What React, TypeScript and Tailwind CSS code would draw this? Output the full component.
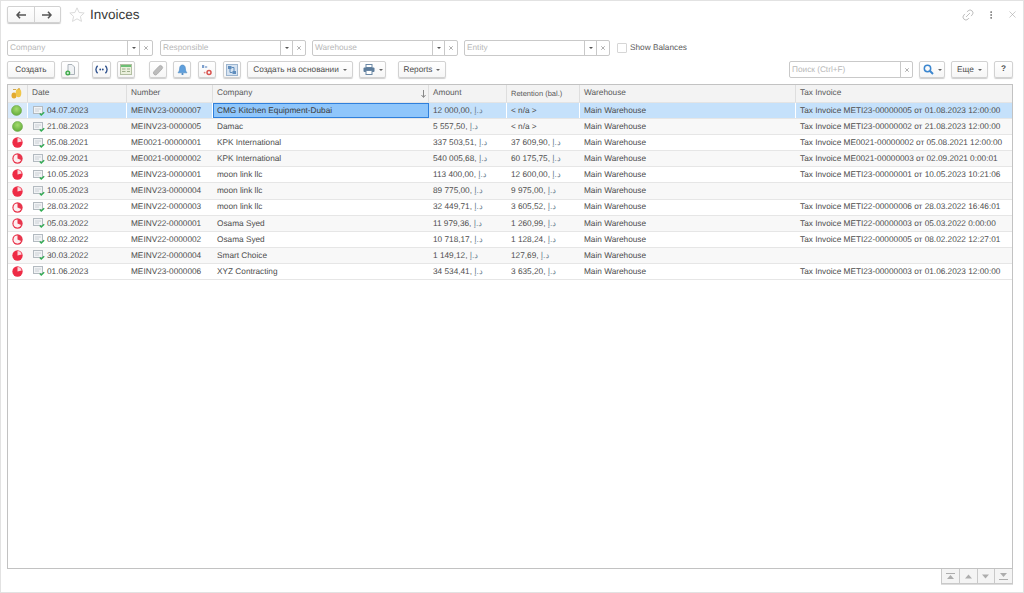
import type { ReactNode } from 'react'
import { X, MoreVertical, Link2 } from 'lucide-react'

type Status = 'paid' | 'part' | 'late'

const DH = 'د.إ'

const rows: { s: Status; date: string; num: string; co: string; amt: string; ret: string; tax: string }[] = [
  { s: 'paid', date: '04.07.2023', num: 'MEINV23-0000007', co: 'CMG Kitchen Equipment-Dubai', amt: '12 000,00', ret: '', tax: 'Tax Invoice METI23-00000005 от 01.08.2023 12:00:00' },
  { s: 'paid', date: '21.08.2023', num: 'MEINV23-0000005', co: 'Damac', amt: '5 557,50', ret: '', tax: 'Tax Invoice METI23-00000002 от 21.08.2023 12:00:00' },
  { s: 'late', date: '05.08.2021', num: 'ME0021-00000001', co: 'KPK International', amt: '337 503,51', ret: '37 609,90', tax: 'Tax Invoice ME0021-00000002 от 05.08.2021 12:00:00' },
  { s: 'part', date: '02.09.2021', num: 'ME0021-00000002', co: 'KPK International', amt: '540 005,68', ret: '60 175,75', tax: 'Tax Invoice ME0021-00000003 от 02.09.2021 0:00:01' },
  { s: 'late', date: '10.05.2023', num: 'MEINV23-0000001', co: 'moon link llc', amt: '113 400,00', ret: '12 600,00', tax: 'Tax Invoice METI23-00000001 от 10.05.2023 10:21:06' },
  { s: 'late', date: '10.05.2023', num: 'MEINV23-0000004', co: 'moon link llc', amt: '89 775,00', ret: '9 975,00', tax: '' },
  { s: 'part', date: '28.03.2022', num: 'MEINV22-0000003', co: 'moon link llc', amt: '32 449,71', ret: '3 605,52', tax: 'Tax Invoice METI22-00000006 от 28.03.2022 16:46:01' },
  { s: 'part', date: '05.03.2022', num: 'MEINV22-0000001', co: 'Osama Syed', amt: '11 979,36', ret: '1 260,99', tax: 'Tax Invoice METI22-00000003 от 05.03.2022 0:00:00' },
  { s: 'part', date: '08.02.2022', num: 'MEINV22-0000002', co: 'Osama Syed', amt: '10 718,17', ret: '1 128,24', tax: 'Tax Invoice METI22-00000005 от 08.02.2022 12:27:01' },
  { s: 'late', date: '30.03.2022', num: 'MEINV22-0000004', co: 'Smart Choice', amt: '1 149,12', ret: '127,69', tax: '' },
  { s: 'late', date: '01.06.2023', num: 'MEINV23-0000006', co: 'XYZ Contracting', amt: '34 534,41', ret: '3 635,20', tax: 'Tax Invoice METI23-00000003 от 01.06.2023 12:00:00' },
]

const gridCols = 'grid grid-cols-[20px_99px_86px_216px_78px_73px_216px_1fr]'

function Btn({ children, className = '' }: { children: ReactNode; className?: string }) {
  return (
    <div className={`flex h-[17px] shrink-0 items-center justify-center rounded-[2px] border border-[#d2d2d2] bg-gradient-to-b from-white to-[#f6f6f6] text-[8.25px] text-[#4d4d4d] shadow-[0_1px_1px_#cfcfcf] ${className}`}>
      {children}
    </div>
  )
}

function Caret() {
  return <span className="ml-1 h-0 w-0 border-x-[2px] border-t-[2.5px] border-x-transparent border-t-[#666]" />
}

function Filter({ label, className = '' }: { label: string; className?: string }) {
  return (
    <div className={`flex h-[16px] w-[146px] shrink-0 items-center rounded-[2px] border border-[#c9c9c9] bg-white text-[8.25px] text-[#b8b8b8] ${className}`}>
      <span className="flex-1 pl-[2px] pt-[1px]">{label}</span>
      <span className="flex h-full w-[12px] items-center justify-center border-l border-[#c9c9c9]">
        <span className="h-0 w-0 border-x-[2px] border-t-[2.5px] border-x-transparent border-t-[#555]" />
      </span>
      <span className="flex h-full w-[13px] items-center justify-center border-l border-[#c9c9c9]">
        <X size={6} strokeWidth={2.5} className="text-[#808080]" />
      </span>
    </div>
  )
}

function StatusIcon({ s }: { s: Status }) {
  if (s === 'paid') {
    return (
      <svg width="11" height="11" viewBox="0 0 10 10">
        <defs>
          <radialGradient id="gr" cx="50%" cy="35%" r="65%">
            <stop offset="0%" stopColor="#a5dc6e" />
            <stop offset="100%" stopColor="#62ab3a" />
          </radialGradient>
        </defs>
        <circle cx="5" cy="5" r="4.6" fill="url(#gr)" stroke="#6aa548" strokeWidth="0.5" />
      </svg>
    )
  }
  if (s === 'late') {
    return (
      <svg width="11" height="11" viewBox="0 0 10 10">
        <circle cx="5" cy="5" r="4.7" fill="#ee2b45" />
        <path d="M5 5 L5 1 A4 4 0 0 1 8.8 4 Z" fill="#fbd5da" />
      </svg>
    )
  }
  return (
    <svg width="11" height="11" viewBox="0 0 10 10">
      <circle cx="5" cy="5" r="4.7" fill="#e8354c" />
      <path d="M5 5 L5 1.4 A3.6 3.6 0 1 0 8.3 6.4 Z" fill="#fdeef0" />
    </svg>
  )
}

function DocIcon() {
  return (
    <svg width="12" height="10" viewBox="0 0 12 10" className="-mt-[1px] shrink-0">
      <rect x="0.5" y="0.5" width="9" height="7" fill="#f1f3f5" stroke="#b3bac0" />
      <path d="M2 3h6M2 5h4" stroke="#ccd1d6" />
      <path d="M6.8 7.4 L8.3 9 L11.2 6.2" fill="none" stroke="#35ad55" strokeWidth="1.4" />
    </svg>
  )
}

function Currency({ value }: { value: string }) {
  return (
    <span>
      {value}, <span className="text-[#6b7f92]">{DH}</span>
    </span>
  )
}

function Cell({ children, className = '' }: { children?: ReactNode; className?: string }) {
  return <div className={`flex items-center overflow-hidden whitespace-nowrap pl-[4px] pt-[1px] ${className}`}>{children}</div>
}

function HeadCell({ children, className = '' }: { children?: ReactNode; className?: string }) {
  return <div className={`flex items-center border-r border-[#dedede] pl-[4px] ${className}`}>{children}</div>
}

export default function App() {
  return (
    <div className="flex h-[593px] w-[1024px] flex-col overflow-hidden border border-[#e2e2e2] bg-white font-['Liberation_Sans',Arial,sans-serif] text-[8.25px] text-[#4d4d4d] [text-rendering:geometricPrecision]">
      {/* title */}
      <div className="flex h-[22px] shrink-0 items-center pl-[6px] pt-[5px]">
        <div className="flex h-[17px] w-[54px] rounded-[2px] border border-[#d2d2d2] bg-gradient-to-b from-white to-[#f6f6f6] shadow-[0_1px_1px_#c8c8c8]">
          <span className="flex flex-1 items-center justify-center border-r border-[#d2d2d2]">
            <svg width="10" height="8" viewBox="0 0 10 8"><path d="M4 0.8 L1 4 L4 7.2 M1 4 H10" fill="none" stroke="#555" strokeWidth="1.6" /></svg>
          </span>
          <span className="flex flex-1 items-center justify-center">
            <svg width="10" height="8" viewBox="0 0 10 8"><path d="M6 0.8 L9 4 L6 7.2 M9 4 H0" fill="none" stroke="#555" strokeWidth="1.6" /></svg>
          </span>
        </div>
        <svg width="16" height="15" viewBox="0 0 16 15" className="ml-[8px]">
          <path d="M8 0.8 L10.1 5.5 L15.2 6 L11.4 9.4 L12.5 14.4 L8 11.8 L3.5 14.4 L4.6 9.4 L0.8 6 L5.9 5.5 Z" fill="#fff" stroke="#dadada" />
        </svg>
        <span className="ml-[5px] mt-[1px] text-[13.5px] text-[#3a3a3a]">Invoices</span>
        <div className="ml-auto flex items-center gap-[11px] pr-[5px] text-[#a0a0a0]">
          <Link2 size={14} strokeWidth={1.1} className="-rotate-45" />
          <MoreVertical size={10} className="text-[#666]" strokeWidth={2} />
          <X size={11} strokeWidth={1.2} />
        </div>
      </div>

      {/* filters */}
      <div className="mt-[17px] flex h-[16px] shrink-0 items-center gap-[6px] pl-[6px]">
        <Filter label="Company" />
        <Filter label="Responsible" className="ml-[1px]" />
        <Filter label="Warehouse" />
        <Filter label="Entity" />
        <span className="ml-[1px] h-[10px] w-[10px] rounded-[1px] border border-[#d6d6d6] bg-white" />
        <span className="-ml-[3px] pt-[1px] text-[#5a5a5a]">Show Balances</span>
      </div>

      {/* toolbar */}
      <div className="mt-[5px] flex h-[18px] shrink-0 items-start pl-[6px] pr-[10px]">
        <Btn className="w-[48px] pt-[1px]">Создать</Btn>
        <Btn className="ml-[6px] w-[18px]">
          <svg width="11" height="12" viewBox="0 0 11 12">
            <path d="M3 0.5h4l2.5 2.5v7.5h-6.5z" fill="#f0f2f4" stroke="#aab2b9" />
            <circle cx="2.8" cy="9" r="2.5" fill="#3aa845" />
            <path d="M1.6 9h2.4M2.8 7.8v2.4" stroke="#fff" strokeWidth="0.8" />
          </svg>
        </Btn>
        <Btn className="ml-[13px] w-[19px]">
          <svg width="13" height="9" viewBox="0 0 13 9">
            <path d="M2.6 0.8 C0.6 3 0.6 6 2.6 8.2 M10.4 0.8 C12.4 3 12.4 6 10.4 8.2" fill="none" stroke="#2c4f8c" strokeWidth="1.3" />
            <circle cx="5.2" cy="4.5" r="0.9" fill="#2c4f8c" />
            <circle cx="7.8" cy="4.5" r="0.9" fill="#2c4f8c" />
          </svg>
        </Btn>
        <Btn className="ml-[6px] w-[18px]">
          <svg width="12" height="11" viewBox="0 0 12 11">
            <rect x="0.5" y="0.5" width="11" height="10" fill="#eaf0dc" stroke="#b3c0a2" />
            <rect x="1" y="1" width="10" height="2" fill="#6cbf74" />
            <path d="M2 5h3.5M2 7.5h3.5M7 5h3M7 7.5h3" stroke="#9eae8c" />
          </svg>
        </Btn>
        <Btn className="ml-[14px] w-[18px]">
          <svg width="12" height="12" viewBox="0 0 12 12">
            <path d="M2 7.5 L7 2.2 a2 2 0 0 1 3 2.8 L5 10.3 a2 2 0 0 1 -3 -2.8 Z" fill="#bcbcbc" stroke="#a2a2a2" strokeWidth="0.7" />
          </svg>
        </Btn>
        <Btn className="ml-[6px] w-[18px]">
          <svg width="11" height="12" viewBox="0 0 11 12">
            <path d="M5.5 1 C3.2 1 2.6 3 2.6 5 C2.6 7 1.5 8 1 8.8 H10 C9.5 8 8.4 7 8.4 5 C8.4 3 7.8 1 5.5 1 Z" fill="#5f9fdc" stroke="#4a86c0" strokeWidth="0.6" />
            <circle cx="5.5" cy="10" r="1.1" fill="#4a86c0" />
          </svg>
        </Btn>
        <Btn className="ml-[7px] w-[18px]">
          <svg width="12" height="12" viewBox="0 0 12 12">
            <path d="M1 1h2.2v3h-2.2z" fill="#7d9fcd" />
            <path d="M4 2h2.2v2h-2.2z" fill="#a4bcdc" />
            <circle cx="8" cy="8.4" r="2" fill="none" stroke="#d9534f" strokeWidth="1.5" />
            <circle cx="3.6" cy="8.6" r="0.9" fill="#e0807d" />
          </svg>
        </Btn>
        <Btn className="ml-[7px] w-[18px]">
          <svg width="12" height="12" viewBox="0 0 12 12">
            <rect x="0.5" y="0.5" width="11" height="11" fill="#d6e3f1" stroke="#9db5cf" />
            <rect x="2" y="2" width="3.5" height="3" fill="#5f8dbd" />
            <rect x="6.5" y="7" width="3.5" height="3" fill="#5f8dbd" />
            <path d="M5.5 3.5h2.5v3.5M6.5 8.5h-2.5v-3.5" fill="none" stroke="#5f8dbd" />
          </svg>
        </Btn>
        <Btn className="ml-[6px] w-[106px] pt-[1px]">Создать на основании<Caret /></Btn>
        <Btn className="ml-[6px] w-[27px]">
          <svg width="12" height="11" viewBox="0 0 12 11">
            <rect x="3" y="0.5" width="6" height="3" fill="#fff" stroke="#6b88a5" />
            <rect x="0.5" y="3.5" width="11" height="4.5" rx="1" fill="#5d7c9b" />
            <rect x="3" y="6.5" width="6" height="4" fill="#fff" stroke="#6b88a5" />
          </svg>
          <Caret />
        </Btn>
        <Btn className="ml-[12px] w-[48px] pt-[1px]">Reports<Caret /></Btn>
        <div className="ml-auto flex h-[17px] w-[124px] shrink-0 items-center rounded-[2px] border border-[#c9c9c9] bg-white text-[#b8b8b8]">
          <span className="flex-1 pl-[2px] pt-[1px]">Поиск (Ctrl+F)</span>
          <span className="flex h-full w-[12px] items-center justify-center border-l border-[#c9c9c9]">
            <X size={6} strokeWidth={2.5} className="text-[#808080]" />
          </span>
        </div>
        <Btn className="ml-[6px] w-[26px]">
          <svg width="11" height="11" viewBox="0 0 11 11">
            <circle cx="4.5" cy="4.5" r="3.2" fill="none" stroke="#3b86cf" strokeWidth="1.5" />
            <path d="M7 7 L10 10" stroke="#3b86cf" strokeWidth="1.9" />
          </svg>
          <Caret />
        </Btn>
        <Btn className="ml-[6px] w-[37px] pt-[1px]">Еще<Caret /></Btn>
        <Btn className="ml-[6px] w-[19px] font-bold">?</Btn>
      </div>

      {/* table */}
      <div className="ml-[6px] mr-[10px] mt-[5px] flex min-h-0 w-[1006px] flex-1 flex-col border border-[#c2c2c2]">
        <div className={`${gridCols} h-[18px] shrink-0 border-b border-[#e4e4e4] bg-[#f3f3f3] text-[#5a5a5a]`}>
          <HeadCell className="justify-center !pl-0 pr-[2px]">
            <svg width="11" height="11" viewBox="0 0 11 11">
              <ellipse cx="3" cy="7.5" rx="2.5" ry="3" fill="#e2a92f" />
              <ellipse cx="7.5" cy="5" rx="2.8" ry="4.2" fill="#f0c64a" />
              <path d="M2 1.5h3M7 0.8h2" stroke="#c9962a" strokeWidth="0.8" />
            </svg>
          </HeadCell>
          <HeadCell>Date</HeadCell>
          <HeadCell>Number</HeadCell>
          <HeadCell className="justify-between pr-[2px]">
            Company
            <svg width="5" height="8" viewBox="0 0 5 8"><path d="M2.5 0V7 M0.5 5 L2.5 7.5 L4.5 5" fill="none" stroke="#888" /></svg>
          </HeadCell>
          <HeadCell>Amount</HeadCell>
          <HeadCell className="text-[7.5px]">Retention (bal.)</HeadCell>
          <HeadCell>Warehouse</HeadCell>
          <HeadCell className="border-r-0">Tax Invoice</HeadCell>
        </div>
        {rows.map((r, i) => {
          const sel = i === 0
          return (
            <div
              key={r.num}
              className={`${gridCols} h-[16.1px] shrink-0 border-b border-[#e6e6e6] ${sel ? 'bg-[#c5e1fb]' : i % 2 ? 'bg-[#f8f8f8]' : 'bg-white'}`}
            >
              <div className={`flex items-center justify-center pr-[2px] ${sel ? 'border-r border-white bg-[#d8e9fa]' : ''}`}><StatusIcon s={r.s} /></div>
              <Cell className={`gap-[2px] !pl-[5px] ${sel ? 'border-r border-white' : ''}`}><DocIcon />{r.date}</Cell>
              <Cell className={sel ? 'border-r border-white' : ''}>{r.num}</Cell>
              {sel ? (
                <div className="flex items-center border border-[#2f80dc] bg-[#8fc6fb] pl-[3px] pt-[1px] text-[#3a3a3a]">{r.co}</div>
              ) : (
                <Cell>{r.co}</Cell>
              )}
              <Cell className={sel ? 'border-r border-white' : ''}><Currency value={r.amt} /></Cell>
              <Cell className={sel ? 'border-r border-white' : ''}>{r.ret ? <Currency value={r.ret} /> : '< n/a >'}</Cell>
              <Cell className={sel ? 'border-r border-white' : ''}>Main Warehouse</Cell>
              <Cell>{r.tax}</Cell>
            </div>
          )
        })}
      </div>

      {/* pager */}
      <div className="mb-[7px] mr-[10px] flex h-[16px] shrink-0 justify-end">
        <div className="flex h-[15px] w-[72px] border-x border-b border-[#c9c9c9] bg-[#f4f4f4] shadow-[0_1px_0_#ddd]">
          <span className="flex flex-1 items-center justify-center border-r border-[#c9c9c9]">
            <svg width="9" height="7" viewBox="0 0 9 7"><path d="M0 0h9v1H0zM4.5 2 L8 6H1z" fill="#adadad" /></svg>
          </span>
          <span className="flex flex-1 items-center justify-center border-r border-[#c9c9c9]">
            <svg width="9" height="5" viewBox="0 0 9 5"><path d="M4.5 0.5 L8 4.5H1z" fill="#adadad" /></svg>
          </span>
          <span className="flex flex-1 items-center justify-center border-r border-[#c9c9c9]">
            <svg width="9" height="5" viewBox="0 0 9 5"><path d="M4.5 4.5 L8 0.5H1z" fill="#adadad" /></svg>
          </span>
          <span className="flex flex-1 items-center justify-center">
            <svg width="9" height="7" viewBox="0 0 9 7"><path d="M1 0h7L4.5 4zM0 6h9v1H0z" fill="#adadad" /></svg>
          </span>
        </div>
      </div>
    </div>
  )
}
